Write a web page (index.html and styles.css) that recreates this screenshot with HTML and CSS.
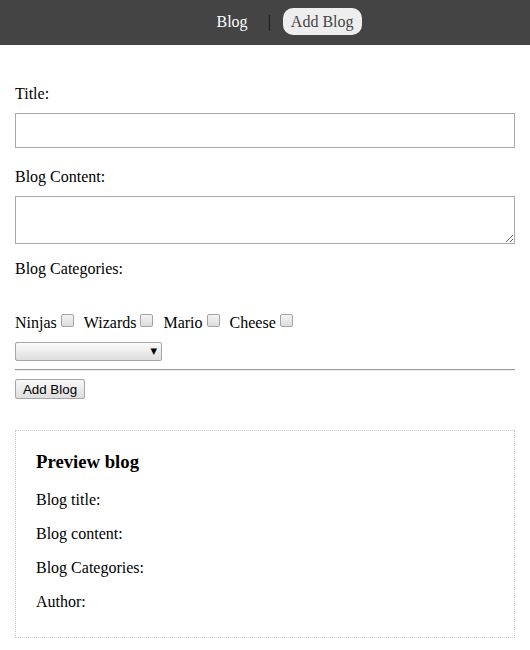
FILE: index.html
```html
<!DOCTYPE html>
<html>
<head>
<meta charset="utf-8">
<link rel="stylesheet" href="styles.css">
</head>
<body>
<nav class="nav">
  <ul class="nav-list">
    <li class="nav-item"><a class="nav-link" href="#">Blog</a></li>
    <li class="nav-sep">|</li>
    <li class="nav-item"><a class="nav-link active" href="#">Add Blog</a></li>
  </ul>
</nav>
<div class="add-blog">
  <form class="form">
    <label class="field-label first">Title:</label>
    <input class="text-input" type="text">
    <label class="field-label content">Blog Content:</label>
    <textarea class="text-area"></textarea>
    <label class="field-label cats">Blog Categories:</label>
    <div class="checkboxes"><label class="cb-label">Ninjas</label><input class="cb" type="checkbox"><label class="cb-label">Wizards</label><input class="cb" type="checkbox"><label class="cb-label">Mario</label><input class="cb" type="checkbox"><label class="cb-label">Cheese</label><input class="cb" type="checkbox"></div>
    <div class="select-row"><span class="select-wrap"><select class="author-select"><option value="" selected></option><option>The Net Ninja</option><option>The Angular Avenger</option><option>The Vue Vindicator</option></select></span></div>
    <hr class="rule">
    <div class="button-row"><button class="submit" type="button">Add Blog</button></div>
  </form>
  <div class="preview">
    <h3 class="preview-title">Preview blog</h3>
    <p class="preview-line">Blog title:</p>
    <p class="preview-line">Blog content:</p>
    <p class="preview-line">Blog Categories:</p>
    <p class="preview-line">Author:</p>
  </div>
</div>
</body>
</html>
```
FILE: styles.css
```css
html, body {
  margin: 0;
  padding: 0;
  background: #fff;
  color: #000;
  font-family: "Liberation Serif", "Times New Roman", serif;
  font-size: 16px;
}

.nav {
  background: #444;
  height: 45px;
  box-sizing: border-box;
  padding-top: 13px;
  margin-bottom: 40px;
}

.nav-list {
  list-style: none;
  margin: 0;
  padding: 0 0 0 40px;
  text-align: center;
  line-height: 18px;
}

.nav-item {
  display: inline-block;
  margin: 0 8px;
}

.nav-sep {
  display: inline-block;
  color: #111;
  margin: 0;
}

.nav-link {
  color: #fff;
  text-decoration: none;
  padding: 5px 8px;
  border-radius: 10px;
}

.nav-link.active {
  background: #eee;
  color: #444;
}

.add-blog {
  max-width: 500px;
  margin: 0 auto;
}

.form {
  margin: 0;
}

.field-label {
  display: block;
  margin: 20px 0 10px;
}

.field-label.first {
  margin-top: 0;
}

.field-label.content {
  margin: 20px 0 10px;
}

.field-label.cats {
  margin: 16px 0 10px;
}

.text-input, .text-area {
  display: block;
  width: 100%;
  box-sizing: border-box;
  padding: 8px;
  margin: 0;
  border: 1px solid #a9a9a9;
}

.text-input {
  height: 35px;
}

.text-area {
  height: 48px;
}

.checkboxes {
  margin: 0;
  line-height: 18px;
}

.cb-label {
  display: inline-block;
  margin: 26px 0 10px;
}

.cb {
  -webkit-appearance: none;
  appearance: none;
  display: inline-block;
  width: 13px;
  height: 13px;
  box-sizing: border-box;
  margin: 3px 10px 3px 4px;
  border: 1px solid #a4a4a4;
  border-radius: 2px;
  background: linear-gradient(#f4f4f4, #dcdcdc);
  vertical-align: -2px;
}

.select-row {
  height: 19px;
  line-height: 19px;
}

.select-wrap {
  position: relative;
  display: inline-block;
  vertical-align: top;
}

.select-wrap::after {
  content: "\25BC";
  position: absolute;
  right: 5px;
  top: 0;
  font-family: "DejaVu Sans", sans-serif;
  font-size: 8.5px;
  line-height: 19px;
  color: #000;
  pointer-events: none;
}

.author-select {
  -webkit-appearance: none;
  appearance: none;
  display: block;
  width: 147px;
  height: 19px;
  box-sizing: border-box;
  margin: 0;
  border: 1px solid #a6a6a6;
  border-radius: 2px;
  background: linear-gradient(#fbfbfb, #dedede);
  font-size: 13px;
}

.rule {
  margin: 8px 0 8px;
  border: 0;
  border-top: 1px solid #9a9a9a;
  border-bottom: 1px solid #eee;
  height: 0;
}

.button-row {
  height: 20px;
  margin-top: 1px;
}

.submit {
  -webkit-appearance: none;
  appearance: none;
  display: block;
  height: 20px;
  width: 70px;
  box-sizing: border-box;
  padding: 0 6px;
  margin: 0;
  border: 1px solid #a6a6a6;
  border-radius: 2px;
  background: linear-gradient(#f8f8f8, #dddddd);
  font-family: "Liberation Sans", Arial, sans-serif;
  font-size: 13.33px;
  color: #000;
}

.preview {
  padding: 10px 20px;
  border: 1px dotted #ccc;
  margin: 31px 0 30px;
}

.preview-title {
  margin: 10px 0 18px;
  font-size: 18.72px;
}

.preview-line {
  margin: 16px 0;
}
```
